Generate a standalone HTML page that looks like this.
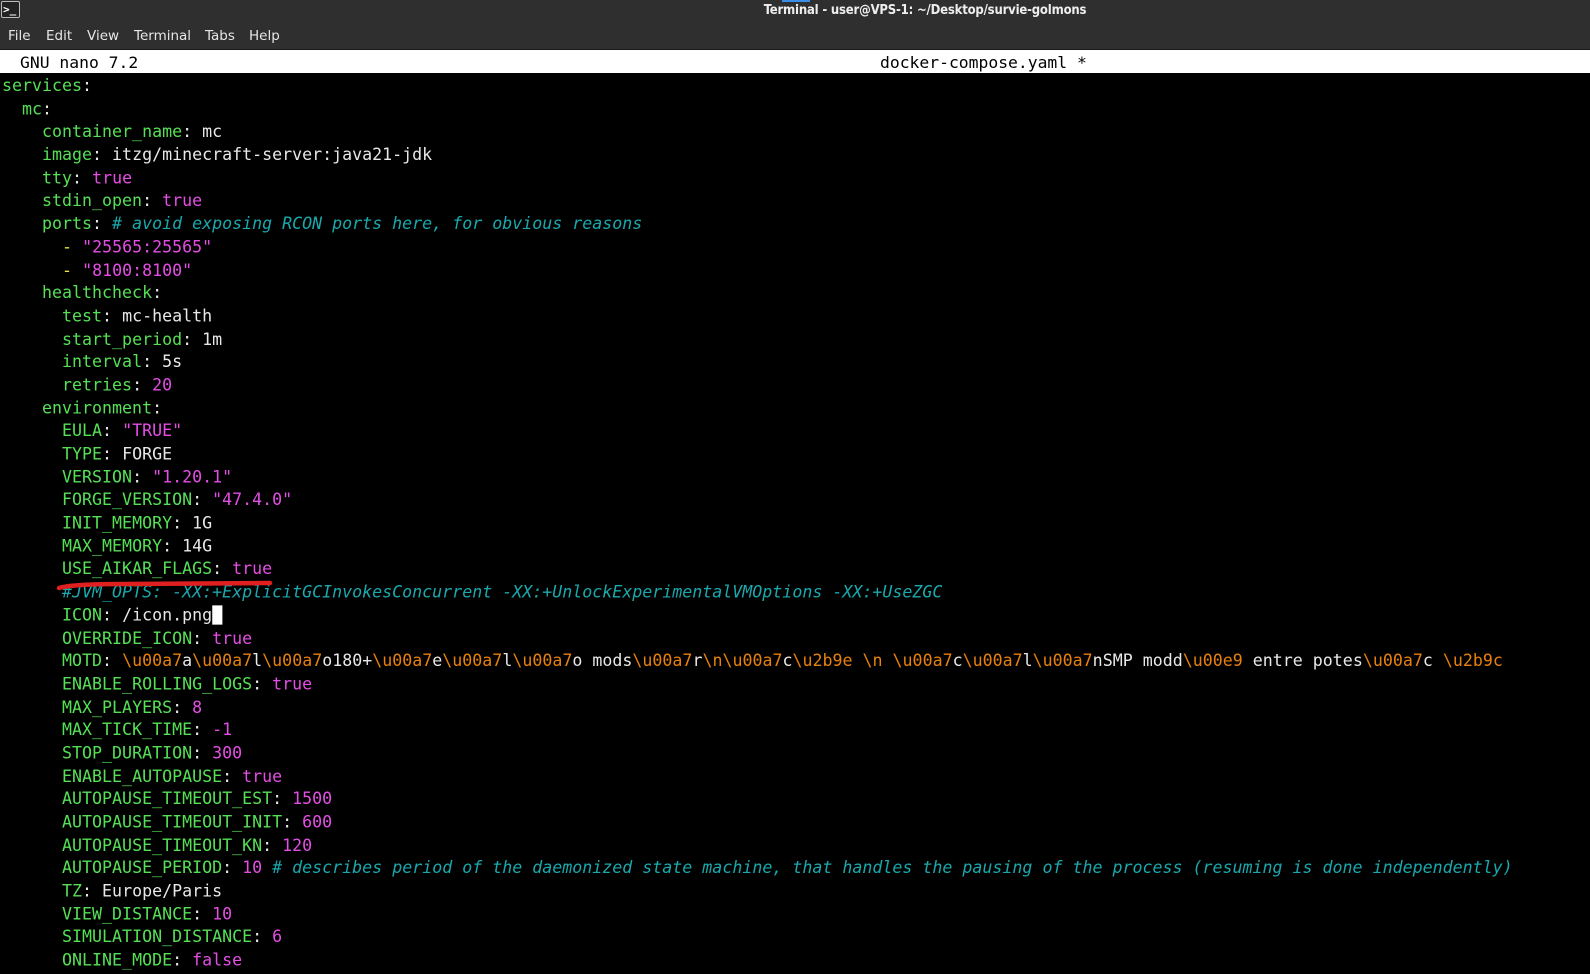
<!DOCTYPE html>
<html><head><meta charset="utf-8"><style>
html,body{margin:0;padding:0;background:#000;width:1590px;height:974px;overflow:hidden}
#title{position:absolute;left:0;top:0;width:1590px;height:24px;background:#2f2f2f;color:#eee;font:bold 13px "DejaVu Sans Condensed","DejaVu Sans",sans-serif;}
#title .t{position:absolute;left:0;width:1850px;text-align:center;top:3px;font-stretch:condensed;letter-spacing:-0.2px}
#title .ic{position:absolute;left:1px;top:1px;width:19px;height:17px;border:1px solid #bbb;border-radius:2px;background:#222;color:#fff;font:bold 11px "DejaVu Sans Mono",monospace;line-height:15px;padding-left:1px;box-sizing:border-box}
#title .bl{position:absolute;left:782px;top:0;width:28px;height:2px;background:#3a8ee6}
#menu{position:absolute;left:0;top:24px;width:1590px;height:25px;background:#2f2f2f;color:#e6e6e6;font:13.5px "DejaVu Sans",sans-serif;border-bottom:1px solid #1a1a1a}
#menu span{position:absolute;top:4px}
#nano{position:absolute;left:0;top:50px;width:1590px;height:23px;background:#fff;color:#000;font:16.37px "DejaVu Sans Mono",monospace;line-height:25px;white-space:pre}
#code{position:absolute;left:1.5px;top:74.5px;font:16.37px "DejaVu Sans Mono",monospace;line-height:22.68px;white-space:pre;color:#e8e8e8;transform:scale(1.0157,1.0141);transform-origin:0 0}
.k{color:#55e055}.v{color:#e44ee4}.c{color:#1aa8ad;font-style:italic}.o{color:#e8800a}.y{color:#e8e83a}
.cur{background:#fff;color:#000}
</style></head><body>
<div id="title"><div class="ic">&gt;_</div><div class="bl"></div><div class="t">Terminal - user@VPS-1: ~/Desktop/survie-golmons</div></div>
<div id="menu"><span style="left:8px">File</span><span style="left:46px">Edit</span><span style="left:87px">View</span><span style="left:134px">Terminal</span><span style="left:205px">Tabs</span><span style="left:249px">Help</span></div>
<div id="nano"><span style="position:absolute;left:20px">GNU nano 7.2</span><span style="position:absolute;left:880px">docker-compose.yaml *</span></div>
<div id="code"><span class="k">services</span>:
  <span class="k">mc</span>:
    <span class="k">container_name</span>: mc
    <span class="k">image</span>: itzg/minecraft-server:java21-jdk
    <span class="k">tty</span>: <span class="v">true</span>
    <span class="k">stdin_open</span>: <span class="v">true</span>
    <span class="k">ports</span>: <span class="c"># avoid exposing RCON ports here, for obvious reasons</span>
      <span class="y">-</span> <span class="v">"25565:25565"</span>
      <span class="y">-</span> <span class="v">"8100:8100"</span>
    <span class="k">healthcheck</span>:
      <span class="k">test</span>: mc-health
      <span class="k">start_period</span>: 1m
      <span class="k">interval</span>: 5s
      <span class="k">retries</span>: <span class="v">20</span>
    <span class="k">environment</span>:
      <span class="k">EULA</span>: <span class="v">"TRUE"</span>
      <span class="k">TYPE</span>: FORGE
      <span class="k">VERSION</span>: <span class="v">"1.20.1"</span>
      <span class="k">FORGE_VERSION</span>: <span class="v">"47.4.0"</span>
      <span class="k">INIT_MEMORY</span>: 1G
      <span class="k">MAX_MEMORY</span>: 14G
      <span class="k">USE_AIKAR_FLAGS</span>: <span class="v">true</span>
      <span class="c">#JVM_OPTS: -XX:+ExplicitGCInvokesConcurrent -XX:+UnlockExperimentalVMOptions -XX:+UseZGC</span>
      <span class="k">ICON</span>: /icon.png<span class="cur"> </span>
      <span class="k">OVERRIDE_ICON</span>: <span class="v">true</span>
      <span class="k">MOTD</span>: <span class="o">\u00a7</span>a<span class="o">\u00a7</span>l<span class="o">\u00a7</span>o180+<span class="o">\u00a7</span>e<span class="o">\u00a7</span>l<span class="o">\u00a7</span>o mods<span class="o">\u00a7</span>r<span class="o">\n\u00a7</span>c<span class="o">\u2b9e \n \u00a7</span>c<span class="o">\u00a7</span>l<span class="o">\u00a7</span>nSMP modd<span class="o">\u00e9</span> entre potes<span class="o">\u00a7</span>c <span class="o">\u2b9c</span>
      <span class="k">ENABLE_ROLLING_LOGS</span>: <span class="v">true</span>
      <span class="k">MAX_PLAYERS</span>: <span class="v">8</span>
      <span class="k">MAX_TICK_TIME</span>: <span class="v">-1</span>
      <span class="k">STOP_DURATION</span>: <span class="v">300</span>
      <span class="k">ENABLE_AUTOPAUSE</span>: <span class="v">true</span>
      <span class="k">AUTOPAUSE_TIMEOUT_EST</span>: <span class="v">1500</span>
      <span class="k">AUTOPAUSE_TIMEOUT_INIT</span>: <span class="v">600</span>
      <span class="k">AUTOPAUSE_TIMEOUT_KN</span>: <span class="v">120</span>
      <span class="k">AUTOPAUSE_PERIOD</span>: <span class="v">10</span> <span class="c"># describes period of the daemonized state machine, that handles the pausing of the process (resuming is done independently)</span>
      <span class="k">TZ</span>: Europe/Paris
      <span class="k">VIEW_DISTANCE</span>: <span class="v">10</span>
      <span class="k">SIMULATION_DISTANCE</span>: <span class="v">6</span>
      <span class="k">ONLINE_MODE</span>: <span class="v">false</span></div>
<svg style="position:absolute;left:0;top:0" width="1590" height="974"><path d="M59 588 Q72 584 125 584 L270 583" stroke="#e02020" stroke-width="4.5" fill="none" stroke-linecap="round"/></svg>
</body></html>
